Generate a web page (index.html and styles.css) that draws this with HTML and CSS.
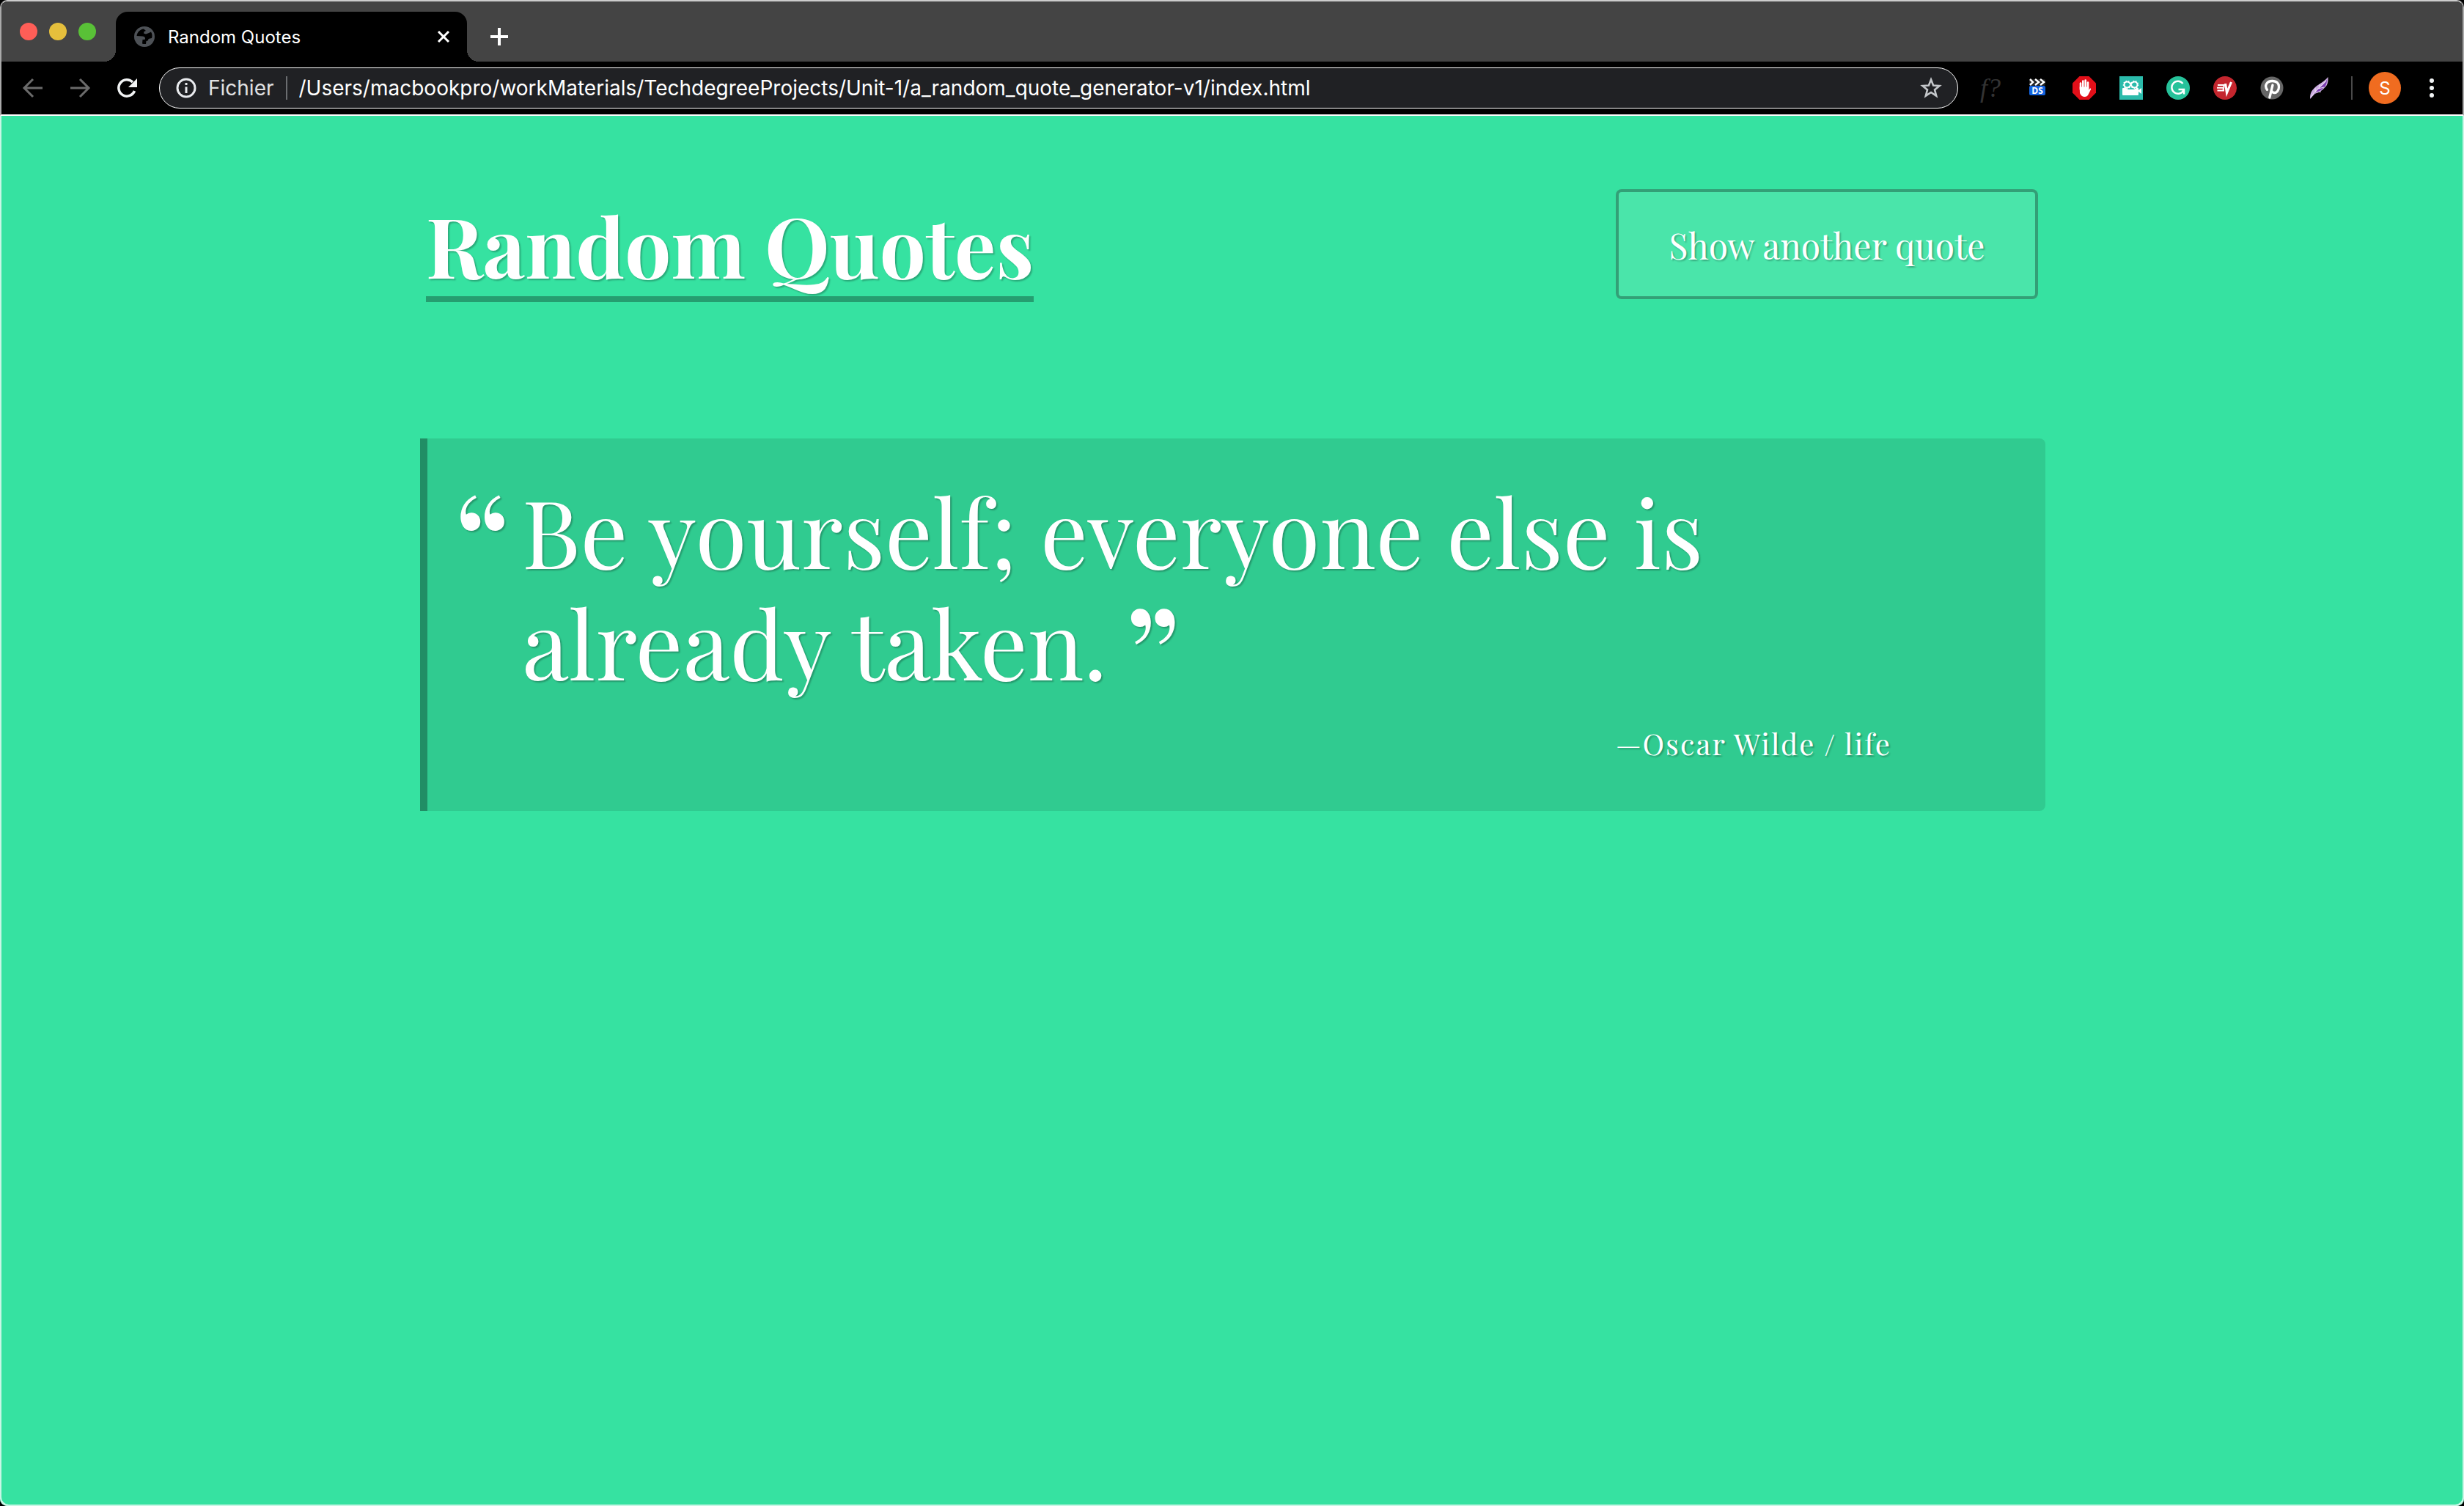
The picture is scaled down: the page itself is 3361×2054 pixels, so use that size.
FILE: index.html
```html
<!DOCTYPE html>
<html lang="en">
<head>
<meta charset="utf-8">
<title>Random Quotes</title>
<link rel="stylesheet" href="styles.css">
</head>
<body>
<div class="chrome">
  <div class="tabstrip">
    <div class="lights"><span class="light close"></span><span class="light minimise"></span><span class="light zoom"></span></div>
    <div class="tab">
      <svg class="favicon" viewBox="0 0 28 28" aria-hidden="true"><circle cx="14" cy="14" r="14" fill="#4d5156"/><path d="M13 3.500C8 4 4 8 3.500 13l8 .500c2 0 3.500 1 3.500 3l-.500 1.500h-3l-.500 5.500c1.500.500 3 .800 5 .500l.500-4c2 0 3-1 3-3l4.500-1c1-3 .500-6-1-8.500l-3 1.500-4 1.500-3-1 .500-2.500 2.500-1z" fill="#000"/></svg>
      <span class="tab-title">Random Quotes</span>
      <button class="icon-button tab-close" aria-label="Close tab"><svg width="20" height="20" viewBox="0 0 20 20"><path d="M3 3l14 14M17 3L3 17" stroke="#fff" stroke-width="3"/></svg></button>
    </div>
    <button class="icon-button new-tab" aria-label="New tab"><svg width="24" height="24" viewBox="0 0 24 24"><path d="M12 0v24M0 12h24" stroke="#fff" stroke-width="4"/></svg></button>
  </div>
  <div class="toolbar">
    <div class="nav">
      <button class="icon-button" aria-label="Back"><svg viewBox="0 0 32 32"><path d="M29 16H5M16 4L4 16l12 12" fill="none" stroke="#6b6b6b" stroke-width="3"/></svg></button>
      <button class="icon-button" aria-label="Forward"><svg viewBox="0 0 32 32"><path d="M3 16h24M16 4l12 12-12 12" fill="none" stroke="#6b6b6b" stroke-width="3"/></svg></button>
      <button class="icon-button" aria-label="Reload"><svg viewBox="0 0 32 32"><path d="M26.500 20A11.200 11.200 0 1 1 24 8" fill="none" stroke="#f1f3f4" stroke-width="3.500"/><path d="M30 3v12H18z" fill="#f1f3f4"/></svg></button>
    </div>
    <div class="address">
      <svg class="info" viewBox="0 0 28 28" aria-hidden="true"><circle cx="14" cy="14" r="12" fill="none" stroke="#e8eaed" stroke-width="3"/><path d="M14 12.500V21M14 7v3" stroke="#e8eaed" stroke-width="3"/></svg>
      <label class="scheme" for="url">Fichier</label>
      <input class="url" id="url" type="text" value="/Users/macbookpro/workMaterials/TechdegreeProjects/Unit-1/a_random_quote_generator-v1/index.html">
      <button class="icon-button" aria-label="Bookmark"><svg viewBox="0 0 32 32"><path d="M16 4.500l3.100 8 8.400.500-6.500 5.400 2.200 8.300L16 22l-7.200 4.700L11 18.400 4.500 13l8.400-.500z" fill="none" stroke="#c4c7ca" stroke-width="2.600"/></svg></button>
    </div>
    <div class="extensions">
      <button class="icon-button font-finder" aria-label="WhatFont">f?</button>
      <button class="icon-button" aria-label="DS"><svg viewBox="0 0 32 32"><rect x="5" y="4" width="22" height="9" rx="2" fill="#222"/><path d="M6 4l4 4-4 4M13 4l5 4-5 4M20 4l5 4-5 4" fill="none" stroke="#fff" stroke-width="2.500"/><rect x="5" y="13" width="22" height="13" rx="2" fill="#1263e0"/><text x="16" y="24" text-anchor="middle" class="ds">DS</text></svg></button>
      <button class="icon-button" aria-label="AdBlock"><svg viewBox="0 0 32 32"><path d="M9.500 0h13L32 9.500v13L22.500 32h-13L0 22.500v-13z" fill="#e20f19"/><path d="M11 18V9.500M14.300 16V6.500M17.700 16V5.500M21 17V8.500" stroke="#fff" stroke-width="2.600" stroke-linecap="round"/><path d="M9.700 14.500h12.600l-.2 4.500 1.200-2c1-1.200 2.300-.5 1.700 1L22 24c-1 2.500-2.800 4-5.500 4s-5.500-2-6.500-5z" fill="#fff"/></svg></button>
      <button class="icon-button" aria-label="Screen recorder"><svg viewBox="0 0 32 32"><path d="M0 0h32v32H0z" fill="#2bbbab"/><path d="M15.500 11.500c-1.500-3-3.500-4-5-4a4 4 0 0 0 0 8c1.500 0 3.500-1 5-4s3.500-4 5-4a4 4 0 0 1 0 8c-1.500 0-3.500-1-5-4z" fill="none" stroke="#fff" stroke-width="2"/><circle cx="10.500" cy="11.500" r="5" fill="none" stroke="#fff" stroke-width="1.500" stroke-dasharray="1.500 2"/><circle cx="20.500" cy="11.500" r="5" fill="none" stroke="#fff" stroke-width="1.500" stroke-dasharray="1.500 2"/><path d="M5 16h4l3 2h8l3-2h2q1 0 1 1v2l4-3v8l-4-3v4q0 1-1 1H5q-1 0-1-1v-8q0-1 1-1z" fill="#fff"/></svg></button>
      <button class="icon-button" aria-label="Grammarly"><svg viewBox="0 0 32 32"><circle cx="16" cy="16" r="16" fill="#26c29a"/><path d="M22.500 10A8.500 8.500 0 1 0 23.500 19M16.500 18H24v6.500" fill="none" stroke="#fff" stroke-width="2.500"/></svg></button>
      <button class="icon-button" aria-label="ExpressVPN"><svg viewBox="0 0 32 32"><circle cx="16" cy="16" r="16" fill="#c4262e"/><path d="M6 12h9M5 15.800h8M5.500 19.600H15M15 11l-1.500 8" fill="none" stroke="#fff" stroke-width="2"/><path d="M16.500 10l2 12.500L24.500 8" fill="none" stroke="#fff" stroke-width="3.200"/></svg></button>
      <button class="icon-button" aria-label="Pinterest"><svg viewBox="0 0 32 32"><circle cx="16" cy="16" r="15.500" fill="#666"/><path d="M9.500 18.500C5 12 9.500 6.500 16.500 6.500c6 0 9 3.500 9 8 0 5-3 8-6 8-2 0-3-1-3.500-2M17 12l-4.200 17" fill="none" stroke="#fff" stroke-width="3.300" stroke-linecap="round"/></svg></button>
      <button class="icon-button" aria-label="Feather"><svg viewBox="0 0 32 32"><path d="M4 31c0-6 1-10 5-14C14 11 22 9 28.500 1c.500 6-.500 11-4 14-3 4-8 7-14 9z" fill="#c9a9df"/><path d="M4 31C8 22 16 16 27 5c0 5-2 9-5 11-4 4-8 6-13 8z" fill="#7b3bb0"/><path d="M5 29C10 20 18 15 26 6M11 22l8-1M15 17l8-2M11 20v-4M17 15v-4" stroke="#e9dbf3" stroke-width="1.200" fill="none"/></svg></button>
    </div>
    <div class="divider"></div>
    <button class="avatar" aria-label="Profile">S</button>
    <button class="icon-button menu" aria-label="Menu"><svg viewBox="0 0 32 32" fill="#f1f3f4"><circle cx="16" cy="6" r="3"/><circle cx="16" cy="16" r="3"/><circle cx="16" cy="26" r="3"/></svg></button>
  </div>
</div>
<main class="page">
  <div class="container">
    <header class="masthead">
      <h1>Random Quotes</h1>
      <button class="load-quote">Show another quote</button>
    </header>
    <section class="quote-box">
      <p class="quote">Be yourself; everyone else is<br>already taken.</p>
      <p class="source">—Oscar Wilde / life</p>
    </section>
  </div>
</main>
</body>
</html>
```
FILE: styles.css
```css
* { box-sizing: border-box; }

body {
  margin: 0;
  min-height: 100vh;
  display: flex;
  flex-direction: column;
  background: #000;
  font-family: Inter, "Liberation Sans", sans-serif;
}

button {
  font-family: inherit;
  padding: 0;
  border: 0;
  background: none;
}

.icon-button {
  width: 32px;
  height: 32px;
  flex: none;
  display: flex;
  align-items: center;
  justify-content: center;
}

svg { display: block; }

/* browser window */
.chrome {
  background: #000;
  border: 2px solid #aaa;
  border-top-color: #ccc;
  border-bottom-color: #fff;
  border-radius: 10px 10px 0 0;
  overflow: hidden;
}

.tabstrip {
  display: flex;
  height: 82px;
  background: #444;
}

.lights {
  display: flex;
  gap: 16px;
  padding: 29px 25px 0;
  width: 156px;
}

.light {
  width: 24px;
  height: 24px;
  border-radius: 50%;
}

.close { background: #ff5e57; }
.minimise { background: #e5bf3c; }
.zoom { background: #59c137; }

.tab {
  position: relative;
  display: flex;
  align-items: center;
  width: 479px;
  height: 68px;
  margin-top: 14px;
  padding: 0 16px 0 25px;
  background: #000;
  color: #fff;
  border-radius: 16px 16px 0 0;
}

/* outward curves at the foot of the tab */
.tab::before,
.tab::after {
  content: "";
  position: absolute;
  bottom: 0;
  width: 16px;
  height: 16px;
}

.tab::before {
  right: 100%;
  background: radial-gradient(circle at 0 0, #444 16px, #000 16px);
}

.tab::after {
  left: 100%;
  background: radial-gradient(circle at 100% 0, #444 16px, #000 16px);
}

.favicon {
  width: 28px;
  height: 28px;
}

.tab-title {
  flex: 1;
  margin-left: 18px;
  font-size: 24px;
}

.new-tab { margin: 32px 0 0 28px; }

.toolbar {
  display: flex;
  align-items: center;
  height: 72px;
  padding: 0 26px 0 27px;
}

.nav,
.extensions {
  display: flex;
  gap: 32px;
}

.address {
  flex: 1;
  display: flex;
  align-items: center;
  height: 56px;
  margin: 0 28px;
  padding: 0 20px 0 22px;
  background: #202124;
  border: 1px solid #fff;
  border-radius: 28px;
}

.info {
  width: 28px;
  height: 28px;
}

.scheme {
  margin-left: 16px;
  padding-right: 16px;
  border-right: 2px solid #6b6d70;
  font-size: 28px;
  line-height: 32px;
  color: #e0e1e3;
}

.url {
  flex: 1;
  min-width: 0;
  padding: 0 0 0 16px;
  border: 0;
  background: none;
  font-family: inherit;
  font-size: 28px;
  color: #fff;
}

.font-finder {
  font-family: "Liberation Serif", serif;
  font-style: italic;
  font-size: 36px;
  color: #333;
}

.ds {
  font-family: "Open Sans", sans-serif;
  font-size: 12px;
  font-weight: 700;
  fill: #fff;
}

.divider {
  width: 2px;
  height: 32px;
  margin: 0 22px 0 28px;
  background: #4a4a4a;
}

.avatar {
  width: 44px;
  height: 44px;
  border-radius: 50%;
  background: #f06c20;
  color: #fff;
  font-size: 24px;
}

.menu { margin-left: 26px; }

/* quote page */
.page {
  flex: 1;
  padding-left: 2px;
  background: #36e2a1;
  box-shadow: inset 2px -2px #c8f6e5, inset -2px -2px #c8f6e5;
  border-radius: 0 0 10px 10px;
  color: #fff;
  font-family: "Playfair Display", "Liberation Serif", serif;
  text-shadow: 2px 2px 2px rgba(0, 0, 0, 0.25);
}

.container {
  width: 66%;
  margin: 0 auto;
  padding-top: 100px;
}

.masthead {
  display: flex;
  justify-content: space-between;
  align-items: flex-start;
  padding: 0 10px 0 8px;
}

h1 {
  margin: 14px 0 0;
  padding-bottom: 8px;
  border-bottom: 8px solid rgba(0, 0, 0, 0.3);
  font-size: 112px;
  font-weight: 700;
  line-height: 124px;
}

.load-quote {
  width: 576px;
  height: 150px;
  padding-top: 2px;
  border: 4px solid rgba(0, 0, 0, 0.3);
  border-radius: 8px;
  background: rgba(255, 255, 255, 0.1);
  color: inherit;
  font-size: 48px;
  text-shadow: inherit;
}

.quote-box {
  margin-top: 186px;
  padding: 49px 144px 68px 129px;
  border-left: 10px solid rgba(0, 0, 0, 0.3);
  border-radius: 0 8px 8px 0;
  background: rgba(0, 0, 0, 0.1);
}

.quote {
  position: relative;
  margin: 0;
  font-size: 128px;
  line-height: 152px;
}

.quote::before,
.quote::after {
  font-size: 192px;
}

.quote::before {
  content: "“";
  position: absolute;
  top: 12px;
  right: 100%;
  margin-right: 14px;
}

.quote::after {
  content: "”";
  margin-left: 22px;
  line-height: 0;
  vertical-align: -42px;
}

.source {
  width: 442px;
  margin: 39px 0 0 auto;
  font-size: 40px;
  line-height: 48px;
  letter-spacing: 2px;
}
```
